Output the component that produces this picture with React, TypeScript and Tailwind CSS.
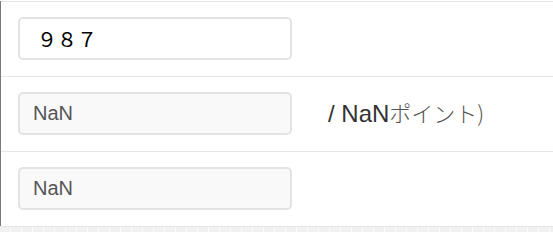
import { useState } from 'react';

const font = "font-['Liberation_Sans','Noto_Sans_CJK_JP',sans-serif]";

export default function App() {
  const [value, setValue] = useState('９８７');

  return (
    <div className={`w-[553px] h-[232px] bg-white overflow-hidden ${font}`}>
      <div className="border-l border-[#7a7a7a] mt-px">
        <div className="border-t border-[#e6e6e6] pt-[15px] pb-[16px] pl-[17px]">
          <input
            value={value}
            onChange={(e) => setValue(e.target.value)}
            className="w-[274px] h-[43px] border-2 border-[#e3e3e3] rounded-[5px] bg-white pl-[17px] text-[20px] text-black outline-none font-['Noto_Sans_CJK_JP',sans-serif]"
          />
        </div>
        <div className="border-t border-[#e6e6e6] pt-[15px] pb-[16px] pl-[17px] flex items-center">
          <input
            value="NaN"
            disabled
            className="w-[274px] h-[43px] border-2 border-[#e3e3e3] rounded-[5px] bg-[#f9f9f9] pl-[13px] text-[20px] text-[#555]"
          />
          <div className="ml-[36px] flex items-baseline text-[#333]">
            <span className="text-[24px]">/ NaN</span>
            <span className="text-[22px] text-[#555] font-['Noto_Sans_CJK_JP',sans-serif] font-light">ポイント)</span>
          </div>
        </div>
        <div className="border-t border-[#e6e6e6] pt-[15px] pb-[16px] pl-[17px]">
          <input
            value="NaN"
            disabled
            className="w-[274px] h-[43px] border-2 border-[#e3e3e3] rounded-[5px] bg-[#f9f9f9] pl-[13px] text-[20px] text-[#555]"
          />
        </div>
      </div>
      <div className="border-t border-[#e6e6e6] h-[6px] bg-[repeating-linear-gradient(90deg,#f1f1f1_0_10px,#fbfbfb_10px_11px)]" />
    </div>
  );
}
